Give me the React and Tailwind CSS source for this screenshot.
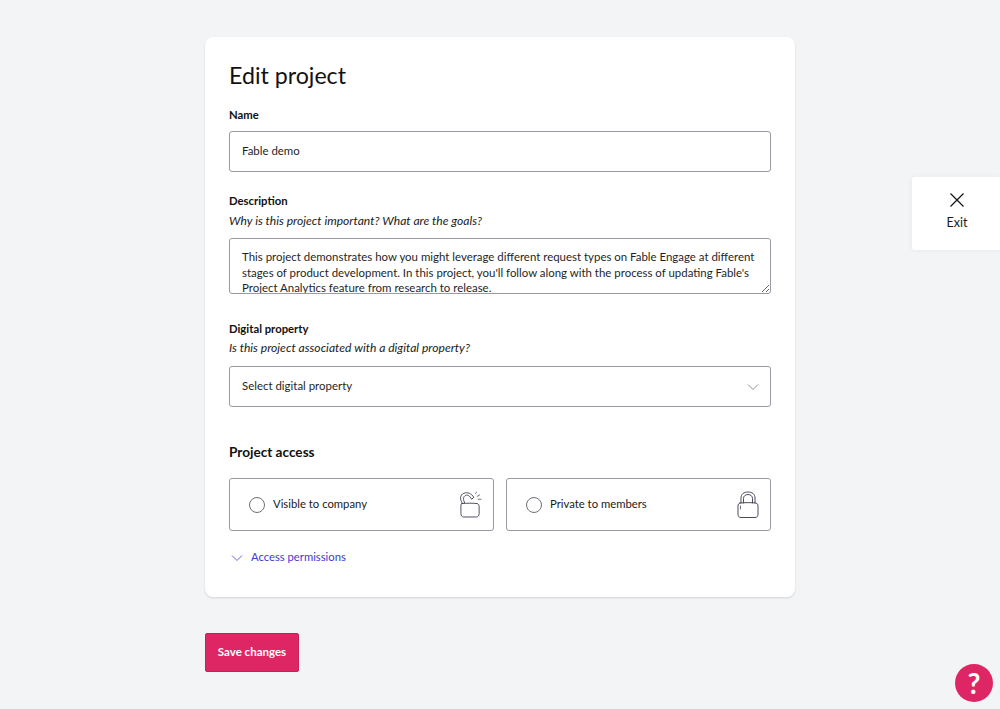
import React from "react";

function Chevron({ className }) {
  return (
    <svg className={className} width="12" height="8" viewBox="0 0 12 8" fill="none" stroke="currentColor" strokeWidth="1">
      <path d="M1 1.5 L6 6.5 L11 1.5" />
    </svg>
  );
}

function OpenLock() {
  return (
    <svg width="23" height="28" viewBox="0 0 24 28" fill="none" stroke="#4a4a5c" strokeWidth="1" strokeLinecap="round" strokeLinejoin="round">
      <path d="M3.5 12 C0.5 8 1 3.5 5 1.8 C9 0.2 13 2 15.5 6 L13.2 8 C11.2 4.4 9 3 7 4 C4.2 5.2 4 8 6 12" />
      <path d="M3 12.5 C8 12 15 12 19 12.5 C20.5 13 21 14 21 16 L21 23 C21 25 20 26.5 18 26.5 L5 26.5 C3 26.5 2 25 2 23 L2 15 C2 13.5 2.2 13 3 12.5 Z" />
      <path d="M17 2 L18.5 0.5 M19 5 L21.5 3.5 M20 8 L23 8" strokeWidth="0.8" />
    </svg>
  );
}

function ClosedLock() {
  return (
    <svg width="22" height="28" viewBox="0 0 22 28" fill="none" stroke="#4a4a5c" strokeWidth="1" strokeLinecap="round" strokeLinejoin="round">
      <path d="M4 12 L4 7 C4 3 7 1 11 1 C15 1 18 3 18 7 L18 12" />
      <path d="M6.5 12 L6.5 7.5 C6.5 5 8.5 3.5 11 3.5 C13.5 3.5 15.5 5 15.5 7.5 L15.5 12" />
      <path d="M3 12 C8 11.5 15 11.5 19 12 C20.5 12.5 21 13.5 21 15 L21 23 C21 25.5 20 26.5 18 26.5 L4 26.5 C2 26.5 1 25.5 1 23 L1 15 C1 13.5 1.5 12.5 3 12 Z" />
      <path d="M3.5 15 L3.5 18" strokeWidth="0.8" />
    </svg>
  );
}

function Option({ label, children }) {
  return (
    <div className="flex-1 h-[53px] flex items-center border border-[#9a9aa5] rounded-[3px] pl-[19px] pr-[11px]">
      <span className="w-4 h-4 border border-[#6f6f78] rounded-full shrink-0" />
      <span className="ml-[8px] flex-1 text-[11.3px] leading-[18px] text-[#1a1a1a] -mt-[1px]">{label}</span>
      {children}
    </div>
  );
}

export default function App() {
  return (
    <div className="relative h-[709px] overflow-hidden bg-[#f3f4f6] font-['Lato','Liberation_Sans',sans-serif] text-[#111111]">
      <div className="w-[590px] ml-[205px] pt-[37px]">
        <div className="h-[560px] bg-white rounded-[8px] shadow-[0_1px_2px_rgba(30,30,60,0.15)] px-6 pt-[21px]">
          <h1 className="text-[23.2px] leading-[34px] font-normal text-[#111]">Edit project</h1>

          <label className="block mt-[14px] text-[11.3px] leading-[18px] font-bold">Name</label>
          <div className="mt-[7px] h-[41px] flex items-center border border-[#9a9aa5] rounded-[3px] px-3 pb-[1px] text-[11.45px] text-[#1f1f1f]">Fable demo</div>

          <label className="block mt-[20px] text-[11.3px] leading-[18px] font-bold">Description</label>
          <p className="mt-[2px] text-[12.1px] leading-[18px] italic text-[#1a1a1a]">Why is this project important? What are the goals?</p>
          <textarea
            readOnly
            className="block mt-[8px] w-full h-[56px] border border-[#9a9aa5] rounded-[3px] px-3 pt-[10px] text-[11.45px] leading-[15.5px] text-[#1f1f1f] overflow-hidden outline-none"
            defaultValue="This project demonstrates how you might leverage different request types on Fable Engage at different stages of product development. In this project, you'll follow along with the process of updating Fable's Project Analytics feature from research to release."
          />

          <label className="block mt-[26px] text-[11.3px] leading-[18px] font-bold">Digital property</label>
          <p className="mt-[1px] text-[12.1px] leading-[18px] italic text-[#1a1a1a]">Is this project associated with a digital property?</p>
          <div className="mt-[9px] h-[41px] flex items-center justify-between border border-[#9a9aa5] rounded-[3px] pl-3 pr-[11px] text-[11.45px] text-[#1f1f1f]">
            <span className="-mt-[1px]">Select digital property</span>
            <Chevron className="text-[#8d8d9c]" />
          </div>

          <h2 className="mt-[35px] text-[13.6px] leading-[20px] font-bold text-[#111]">Project access</h2>
          <div className="mt-[16px] flex gap-3">
            <Option label="Visible to company"><OpenLock /></Option>
            <Option label="Private to members"><ClosedLock /></Option>
          </div>
          <div className="mt-[17px] flex items-center text-[11.25px] leading-[18px] text-[#4238d6]">
            <Chevron className="ml-[2px] mr-[8px] text-[#6a63d8] mt-[2px]" />
            <span>Access permissions</span>
          </div>
        </div>
        <button className="mt-[36px] w-[94px] h-[39px] bg-[#df2664] rounded-[2px] border border-[#c91f57] text-white text-[11.5px] font-bold pb-[2px]">Save changes</button>
      </div>

      <div className="absolute right-0 top-[177px] w-[88px] h-[73px] bg-white rounded-l-[3px] flex flex-col items-center pt-[15px] shadow-[0_0_6px_rgba(30,30,60,0.05)]">
        <svg className="ml-[2px]" width="16" height="16" viewBox="0 0 16 16" stroke="#111" strokeWidth="1.2" fill="none">
          <path d="M1.5 1.5 L14.5 14.5 M14.5 1.5 L1.5 14.5" />
        </svg>
        <span className="mt-[5px] ml-[2px] text-[12.6px] leading-[20px] text-[#1a1a1a]">Exit</span>
      </div>

      <div className="absolute left-[955px] top-[664px] w-[38px] h-[38px] rounded-full bg-[#df2664] flex items-center justify-center text-white text-[28px] font-bold leading-none">?</div>
    </div>
  );
}
